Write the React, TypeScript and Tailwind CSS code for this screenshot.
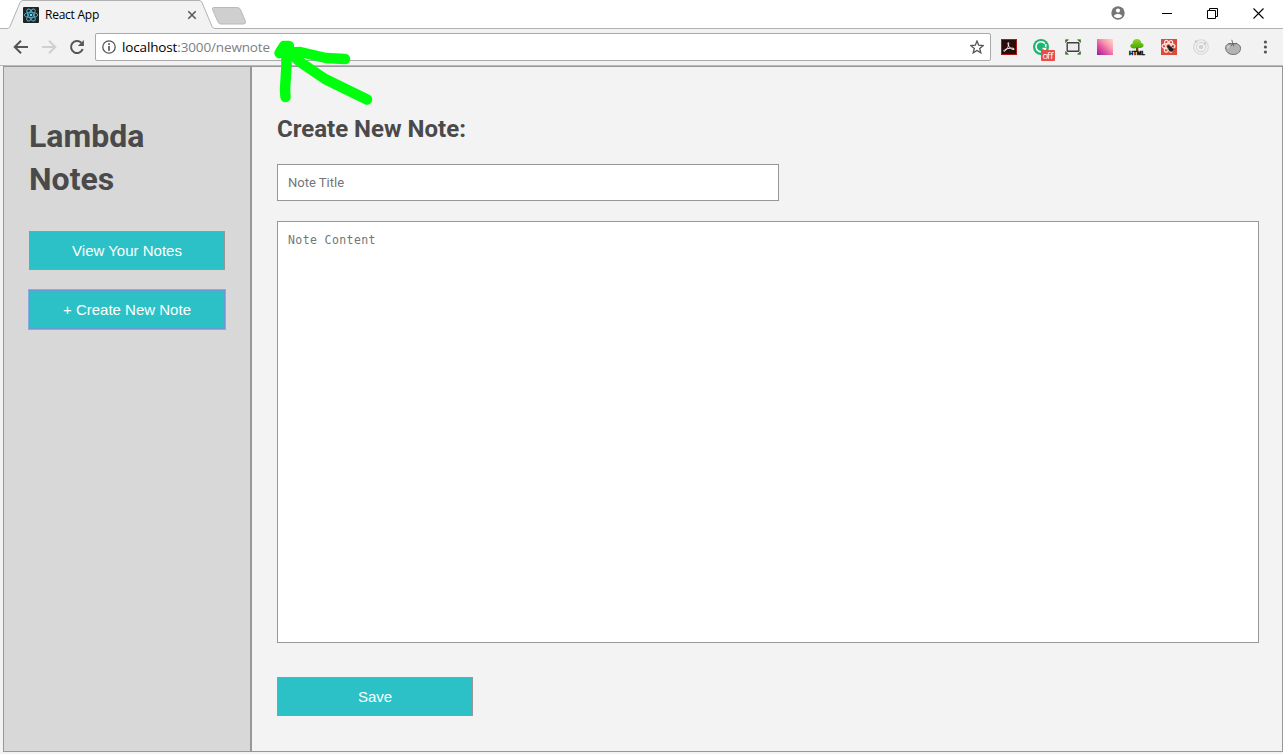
import type { ReactNode } from 'react';

function TabStrip() {
  return (
    <div className="relative flex h-[29px] shrink-0 items-start bg-white">
      <svg className="absolute inset-0" width="1283" height="29" viewBox="0 0 1283 29">
        <path d="M0 28.5H7Q9 28.5 10 26.5L20 2.5Q21 0.5 23 0.5H199Q201 0.5 202 2.5L212 26.5Q213 28.5 215 28.5H1283V29H0Z" fill="#f2f2f2" />
        <path d="M0 28.5H7Q9 28.5 10 26.5L20 2.5Q21 0.5 23 0.5H199Q201 0.5 202 2.5L212 26.5Q213 28.5 215 28.5H1283" fill="none" stroke="#b2b2b2" />
        <path d="M213.5 7.5H237.5Q239.5 7.5 240.5 9.5L245.5 21.5Q246 24 243.5 24H221Q219 24 218 22L212.5 9.5Q212 7.5 213.5 7.5Z" fill="#cfcfcf" stroke="#b9b9b9" />
      </svg>
      <div className="relative flex h-[29px] w-[212px] items-center pl-[23px] pr-[15px]">
        <svg width="16" height="16" viewBox="0 0 16 16">
          <rect width="16" height="16" rx="1" fill="#222" />
          <g fill="none" stroke="#52b4d0" strokeWidth="0.9">
            <ellipse cx="8" cy="8" rx="6.7" ry="2.6" />
            <ellipse cx="8" cy="8" rx="6.7" ry="2.6" transform="rotate(60 8 8)" />
            <ellipse cx="8" cy="8" rx="6.7" ry="2.6" transform="rotate(120 8 8)" />
          </g>
          <circle cx="8" cy="8" r="1.3" fill="#61dafb" />
        </svg>
        <span className="ml-[6px] whitespace-nowrap font-['Open_Sans',sans-serif] text-[12px] leading-4 tracking-[-0.25px] text-black">React App</span>
        <svg className="ml-auto" width="10" height="10" viewBox="0 0 10 10">
          <path d="M1.3 1.3L8.7 8.7M8.7 1.3L1.3 8.7" stroke="#5a5a5a" strokeWidth="1.6" />
        </svg>
      </div>
      <div className="relative ml-auto flex h-[26px] items-center pr-[19px]">
        <svg width="14" height="14" viewBox="0 0 14 14">
          <circle cx="7" cy="7" r="6.7" fill="#757575" />
          <circle cx="7" cy="4.6" r="2.1" fill="#fff" />
          <path d="M2.8 9.9C3.6 8.6 5.4 8 7 8s3.4.6 4.2 1.9C10.2 11.3 8.7 12 7 12s-3.2-.7-4.2-2.1Z" fill="#fff" />
        </svg>
        <svg className="ml-[37px]" width="10" height="11" viewBox="0 0 10 11"><path d="M0 5.5H10" stroke="#000" /></svg>
        <svg className="ml-[35px]" width="11" height="11" viewBox="0 0 11 11">
          <path d="M.5 2.5H8.5V10.5H.5ZM2.5 2.5V.5H10.5V8.5H8.5" fill="none" stroke="#000" />
        </svg>
        <svg className="ml-[35px]" width="11" height="11" viewBox="0 0 11 11"><path d="M.5.5L10.5 10.5M10.5.5L.5 10.5" stroke="#000" strokeWidth="1.1" /></svg>
      </div>
    </div>
  );
}

function Ext({ children }: { children: ReactNode }) {
  return <svg className="shrink-0 overflow-visible" width="16" height="16" viewBox="0 0 16 16">{children}</svg>;
}

function Toolbar() {
  return (
    <div className="flex h-[37px] shrink-0 items-center border-b border-[#b9b9b9] bg-[#f2f2f2] pl-[13px] pr-[10px]">
      <div className="flex gap-3">
        <Ext><path d="M15 8H2M8 1.7L1.7 8L8 14.3" fill="none" stroke="#555" strokeWidth="2" /></Ext>
        <Ext><path d="M1 8H14M8 1.7L14.3 8L8 14.3" fill="none" stroke="#d0d0d0" strokeWidth="2" /></Ext>
        <Ext>
          <path d="M13.7 10A6 6 0 1 1 12.3 3.8" fill="none" stroke="#555" strokeWidth="2" />
          <path d="M14.9 1V7H8.9Z" fill="#555" />
        </Ext>
      </div>
      <div className="ml-[10px] flex h-[28px] w-[896px] items-center rounded-[2px] border border-[#a9a9a9] bg-white pl-[6px] pr-[6px]">
        <svg width="14" height="14" viewBox="0 0 14 14">
          <circle cx="7" cy="7" r="6.2" fill="none" stroke="#555" strokeWidth="1.3" />
          <path d="M7 6V10.7M7 3.3V4.9" stroke="#555" strokeWidth="1.7" />
        </svg>
        <span className="ml-[6px] whitespace-nowrap font-['Open_Sans',sans-serif] text-[13.5px] leading-5 tracking-[-0.14px] text-black">
          localhost<span className="text-[#808080]">:3000/newnote</span>
        </span>
        <svg className="ml-auto" width="14" height="14" viewBox="0 0 14 14">
          <path d="M7 1L8.7 5.2L13.2 5.5L9.7 8.4L10.8 12.8L7 10.4L3.2 12.8L4.3 8.4L.8 5.5L5.3 5.2Z" fill="none" stroke="#555" strokeWidth="1.3" />
        </svg>
      </div>
      <div className="ml-[10px] flex gap-4">
        <Ext>
          <rect x=".5" y=".5" width="15" height="15" fill="#2a0d0b" stroke="#a71c10" />
          <path d="M3 12.300C5 12 7.700 8 7.700 4.500C7.700 3 6.500 3.300 7 5C8 8.500 10.500 10.700 13 10.500C14 9.600 12 8.800 9 9.200C6 9.600 3.300 10.500 2.800 11.700Z" fill="none" stroke="#f4eded" strokeWidth="1" />
        </Ext>
        <Ext>
          <circle cx="8" cy="8" r="8" fill="#1eb571" />
          <path d="M11.800 4.500A5 5 0 1 0 12.600 9.500H9.500M12.700 5V8" fill="none" stroke="#fff" strokeWidth="1.600" />
          <rect x="8" y="11" width="14" height="11" rx="1" fill="#ea4c46" />
          <text x="9.500" y="20" fill="#fff" fontFamily="Open Sans, sans-serif" fontSize="9.500" textLength="11">off</text>
        </Ext>
        <Ext>
          <rect x="2.200" y="3.700" width="11.600" height="8.600" rx=".5" fill="#ececec" stroke="#404040" strokeWidth="1.400" />
          <path d="M.5 3.500V.7H3.500L.5 3.500M12.500 .7H15.500V3.500L12.500 .7M15.500 12.500V15.300H12.500L15.500 12.500M3.500 15.300H.5V12.500L3.500 15.300" fill="#347326" stroke="#347326" strokeWidth=".6" />
        </Ext>
        <Ext>
          <defs>
            <linearGradient id="pink" x1="0" y1="1" x2="1" y2="0"><stop offset="0" stopColor="#8a239b" /><stop offset=".3" stopColor="#d946a0" /><stop offset=".62" stopColor="#fa94ad" /><stop offset="1" stopColor="#ffdcca" /></linearGradient>
            <linearGradient id="leaf" x1="0" y1="0" x2="0" y2="1"><stop offset="0" stopColor="#93d520" /><stop offset="1" stopColor="#43a609" /></linearGradient>
          </defs>
          <rect width="16" height="16" fill="url(#pink)" />
        </Ext>
        <Ext>
          <path d="M7 7H9.300V12H7Z" fill="#7b4518" />
          <path d="M2 8.500C.5 6.700 2 4.700 3.700 4.800C3.400 2 5.300.1 8 .1S12.200 1.800 12.200 4C14.600 4.200 15.500 6.800 13.500 8.300C12 9.600 9.700 9 8 8.500C6.500 9.700 3.500 10 2 8.500Z" fill="url(#leaf)" />
          <text x=".1" y="15.500" fill="#000" stroke="#000" strokeWidth=".4" fontFamily="Liberation Sans, sans-serif" fontWeight="700" fontSize="5.600" textLength="15.800" lengthAdjust="spacingAndGlyphs">HTML</text>
        </Ext>
        <Ext>
          <rect width="16" height="16" fill="#dc4a38" />
          <g fill="none" stroke="#ffe9e6" strokeWidth="1.200">
            <ellipse cx="7.500" cy="7.300" rx="6.500" ry="2.600" />
            <ellipse cx="7.500" cy="7.300" rx="6.500" ry="2.600" transform="rotate(60 7.500 7.300)" />
            <ellipse cx="7.500" cy="7.300" rx="6.500" ry="2.600" transform="rotate(120 7.500 7.300)" />
          </g>
          <ellipse cx="9.800" cy="10" rx="1.900" ry="3.100" transform="rotate(-38 9.800 10)" fill="#222" />
          <circle cx="7.500" cy="7.500" r="1.300" fill="#222" />
          <path d="M6.500 10H8M7.800 12.700L8.800 11M10.500 8.200L11.700 6.500M11.300 10H13.500" stroke="#222" strokeWidth=".9" />
        </Ext>
        <Ext>
          <g fill="none" stroke="#d5d5d5" strokeWidth="1.100"><circle cx="8" cy="8" r="7.300" /><circle cx="8" cy="8" r="4.600" /></g>
          <circle cx="8" cy="8" r="2.300" fill="#d1d1d1" /><circle cx="3" cy="2.500" r="1.200" fill="#c8c8c8" /><circle cx="11.800" cy="4.500" r="1.200" fill="#c8c8c8" />
        </Ext>
        <Ext>
          <path d="M.6 8.700C.6 5.300 4 4.200 8 4.500C12 4.200 15.500 5.500 15.500 9.300C15.500 13.200 12.500 15.500 8.300 15.500S.6 13 .6 8.700Z" fill="#b2b2b2" stroke="#707070" />
          <path d="M2.700 9.500C2.700 7.800 3.500 7 4.500 6.600" fill="none" stroke="#dedede" strokeWidth="1.200" />
          <path d="M8 5.200L6.800 .8M8 5.200L3.500 4.500M8 5.200L6 7M8 5.200L9 7.400M8 5.200L12 4.200" fill="none" stroke="#666" strokeWidth=".9" />
        </Ext>
        <Ext><g fill="#555"><circle cx="8.400" cy="3" r="1.600" /><circle cx="8.400" cy="8" r="1.600" /><circle cx="8.400" cy="13" r="1.600" /></g></Ext>
      </div>
    </div>
  );
}

const button = "block w-[196px] h-[39px] border bg-[#2bc1c6] text-center font-['Liberation_Sans',sans-serif] text-[15px] leading-[37px] text-white";

export default function App() {
  return (
    <div className="relative flex h-[754px] w-[1283px] flex-col overflow-hidden bg-[#f3f3f3] font-[Roboto,sans-serif] text-[#4a4a4a]">
      <TabStrip />
      <Toolbar />
      <div className="ml-[3px] flex h-[686px] w-[1280px]">
        <aside className="w-[248px] shrink-0 border border-[#979797] bg-[#d8d8d8] px-[25px] pt-[48px]">
          <h1 className="mb-[30px] text-[32px] font-bold leading-[43px]">Lambda Notes</h1>
          <button className={`${button} border-[#979797]`}>View Your Notes</button>
          <button className={`${button} mt-5 border-[#6899d2] shadow-[0_0_0_1px_#8eaae2]`}>+ Create New Note</button>
        </aside>
        <main className="flex grow flex-col items-start border border-[#979797] bg-[#f3f3f3] pl-[25px] pt-[46px]">
          <h2 className="mb-[19px] text-[24px] font-bold leading-[32px]">Create New Note:</h2>
          <input placeholder="Note Title" className="h-[37px] w-[502px] border border-[#979797] bg-white px-[10px] font-[Roboto,sans-serif] text-[13px] placeholder:text-[#757575]" />
          <textarea placeholder="Note Content" className="mt-5 h-[422px] w-[982px] resize-none border border-[#979797] bg-white px-[10px] py-[10px] font-['DejaVu_Sans_Mono',monospace] text-[11.5px] leading-[17px] tracking-[0.4px] placeholder:text-[#757575]" />
          <button className={`${button} mt-[34px] border-[#979797]`}>Save</button>
        </main>
      </div>
      <svg className="pointer-events-none absolute left-[270px] top-[36px]" width="110" height="72" viewBox="270 36 110 72">
        <path d="M285.500 97L285 90L286.500 65L286 46L289 46M284 46L279.500 53L300 52L326 58L345 59M285 48L300 62L325 79L367 99.500" fill="none" stroke="#00ff0c" strokeWidth="10.500" strokeLinecap="round" strokeLinejoin="round" />
      </svg>
    </div>
  );
}
